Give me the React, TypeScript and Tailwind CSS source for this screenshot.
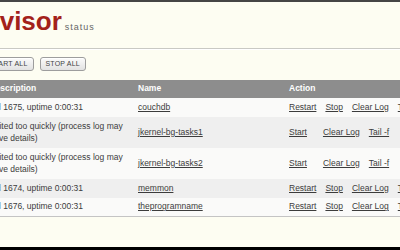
import React from 'react';

type Proc = {
  desc: string;
  name: string;
  running: boolean;
  tall?: boolean;
};

const procs: Proc[] = [
  { desc: 'pid 1675, uptime 0:00:31', name: 'couchdb', running: true },
  { desc: 'Exited too quickly (process log may have details)', name: 'jkernel-bg-tasks1', running: false, tall: true },
  { desc: 'Exited too quickly (process log may have details)', name: 'jkernel-bg-tasks2', running: false, tall: true },
  { desc: 'pid 1674, uptime 0:00:31', name: 'memmon', running: true },
  { desc: 'pid 1676, uptime 0:00:31', name: 'theprogramname', running: true },
];

const Btn: React.FC<{ label: string; className?: string }> = ({ label, className }) => (
  <button
    className={`h-[14px] px-[5px] rounded-[3px] border border-[#9d9d9d] bg-gradient-to-b from-[#fbfbfb] to-[#e2e2e2] text-[7px] leading-none tracking-[0.2px] text-[#444] shadow-[inset_0_1px_0_#fff] ${className ?? ''}`}
  >
    {label}
  </button>
);

export default function App() {
  return (
    <div className="w-[400px] h-[250px] overflow-hidden flex flex-col bg-[#fdfdf2] font-['Liberation_Sans',Arial,sans-serif] text-[#3c3c3c]">
      <div className="h-[2px] shrink-0 bg-[#454545]" />

      {/* title */}
      <div className="pt-[6px] pb-[13px] border-b border-[#c9c9c4] shrink-0">
        <div className="flex items-baseline ml-[-74px] whitespace-nowrap">
          <span className="text-[26px] leading-[26px] font-bold text-[#a3211a]">Supervisor</span>
          <span className="ml-[3px] text-[9px] tracking-[1px] text-[#666]">status</span>
        </div>
      </div>
      <div className="h-px bg-white shrink-0" />

      {/* buttons */}
      <div className="flex gap-[6px] pt-[7px] ml-[-16.5px] shrink-0">
        <Btn label="START ALL" />
        <Btn label="STOP ALL" />
      </div>

      {/* table */}
      <div className="mt-[9px] ml-[-10.5px] w-[520px] shrink-0 text-[8.5px] leading-[12.5px]">
        <div className="flex items-center h-[18px] bg-[#8d8d8d] text-white font-bold">
          <div className="w-[148.5px] shrink-0">Description</div>
          <div className="w-[151px] shrink-0">Name</div>
          <div>Action</div>
        </div>
        {procs.map((p, i) => (
          <div
            key={p.name}
            className={`flex items-center ${p.tall ? 'h-[31px]' : 'h-[19px]'} ${
              i % 2 === 0 ? 'bg-[#fafaf9]' : 'bg-[#efefef]'
            } ${i === procs.length - 1 ? 'border-b border-[#c4c4c4]' : ''}`}
          >
            <div className="w-[148.5px] shrink-0 pr-[8px]">{p.desc}</div>
            <div className="w-[151px] shrink-0">
              <a className="underline">{p.name}</a>
            </div>
            <div className="flex whitespace-nowrap">
              {p.running ? (
                <>
                  <a className="underline mr-[9px]">Restart</a>
                  <a className="underline mr-[9px]">Stop</a>
                  <a className="underline mr-[9px]">Clear Log</a>
                  <a className="underline">Tail -f</a>
                </>
              ) : (
                <>
                  <a className="underline mr-[16px]">Start</a>
                  <a className="underline mr-[9px]">Clear Log</a>
                  <a className="underline">Tail -f</a>
                </>
              )}
            </div>
          </div>
        ))}
      </div>

      <div className="flex-1" />
      <div className="h-[3px] shrink-0 bg-black" />
    </div>
  );
}
